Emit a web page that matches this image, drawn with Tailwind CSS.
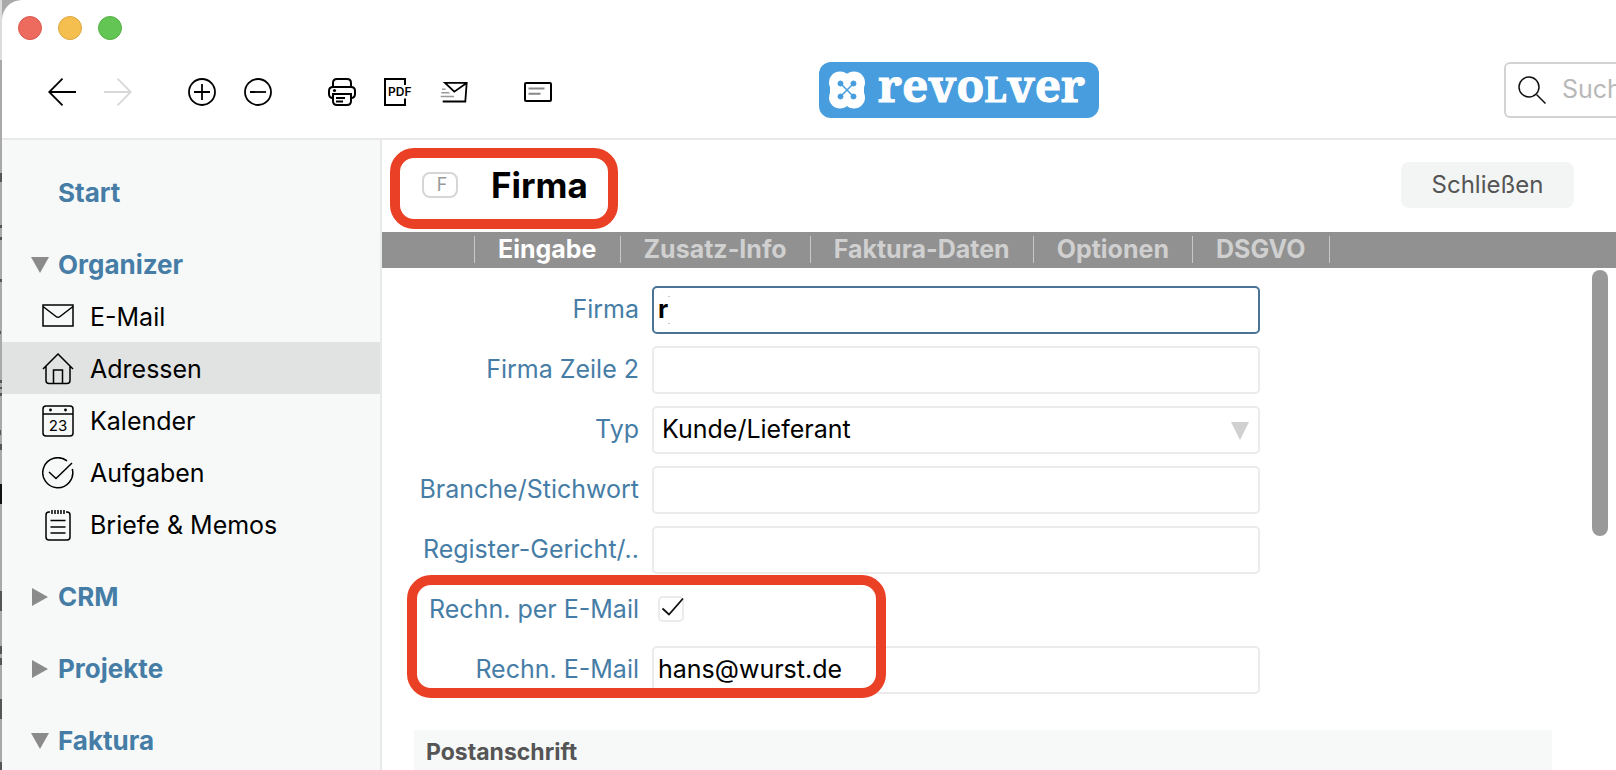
<!DOCTYPE html>
<html lang="de">
<head>
    <meta charset="UTF-8">
    <meta name="viewport" content="width=device-width, initial-scale=1.0">
    <title>revolver – Firma</title>
    <script src="https://cdn.jsdelivr.net/npm/@tailwindcss/browser@4"></script>
</head>
<body class="h-screen overflow-hidden bg-[#a9a9a9] pl-[2px] font-['Inter','Liberation_Sans',sans-serif] text-[25px] leading-8 text-black">
    <!-- document behind the window -->
    <svg class="absolute left-0 top-0 h-full w-[2px]" viewBox="0 0 2 770" preserveAspectRatio="none" fill="#555">
        <path fill="#dedcda" d="M0 0h2v60H0z"/>
        <path d="M0 173h2v9H0zM0 225h2v3H0zM0 237h2v3H0zM0 279h2v3H0zM0 331h1v3H0zM0 380h2v3H0zM0 387h2v2H0zM0 393h2v3H0zM0 430h1v5H0zM0 444h2v6H0zM0 591h2v20H0zM0 646h2v8H0zM0 658h2v7H0zM0 699h2v20H0zM0 762h2v8H0z"/>
        <path fill="#111" d="M0 484h2v20H0z"/>
    </svg>

    <div class="relative flex h-full flex-col overflow-hidden rounded-tl-[20px] bg-white">
        <header class="shrink-0 border-b-2 border-[#e9e9e9] pt-4 pb-5">
            <div class="flex gap-4 pl-4">
                <button type="button" aria-label="Fenster schließen" class="size-6 rounded-full border border-[#d9584e] bg-[#ed6a5f]"></button>
                <button type="button" aria-label="Minimieren" class="size-6 rounded-full border border-[#dda63f] bg-[#f5bf4f]"></button>
                <button type="button" aria-label="Vollbild" class="size-6 rounded-full border border-[#56b045] bg-[#62c554]"></button>
            </div>
            <div class="mt-[22px] flex items-center pl-[46px]">
                <div class="flex shrink-0 items-center gap-14 pt-1">
                    <div class="flex gap-7">
                        <button type="button" aria-label="Zurück">
                            <svg class="size-7" viewBox="0 0 28 28" fill="none" stroke="#000" stroke-width="1.8"><path d="M28 14H1.500M14.500 .7 1.200 14l13.300 13.300"/></svg>
                        </button>
                        <button type="button" aria-label="Vor">
                            <svg class="size-7" viewBox="0 0 28 28" fill="none" stroke="#d8d8d8" stroke-width="1.8"><path d="M0 14h26.500M13.500 .7 26.800 14 13.500 27.300"/></svg>
                        </button>
                    </div>
                    <div class="flex gap-7">
                        <button type="button" aria-label="Neu">
                            <svg class="size-7" viewBox="0 0 28 28" fill="none" stroke="#000" stroke-width="1.8"><circle cx="14" cy="14" r="13"/><path d="M6 14h16M14 6v16"/></svg>
                        </button>
                        <button type="button" aria-label="Entfernen">
                            <svg class="size-7" viewBox="0 0 28 28" fill="none" stroke="#000" stroke-width="1.8"><circle cx="14" cy="14" r="13"/><path d="M6 14h16"/></svg>
                        </button>
                    </div>
                    <div class="flex gap-7">
                        <button type="button" aria-label="Drucken">
                            <svg class="size-7" viewBox="0 0 28 28" fill="none" stroke="#000" stroke-width="2">
                                <path d="M5 9V5q0-4 4-4h10q4 0 4 4v4"/>
                                <path d="M5 20q-4 0-4-4v-3q0-4 4-4h18q4 0 4 4v3q0 4-4 4"/>
                                <path d="M4 16h20M5 16v7q0 4 4 4h10q4 0 4-4v-7"/>
                                <path d="M8 20h9M8 23.500h7"/>
                                <circle cx="6.500" cy="12.500" r="1.600" fill="#000" stroke="none"/>
                            </svg>
                        </button>
                        <button type="button" aria-label="PDF">
                            <svg class="size-7 overflow-visible" viewBox="0 0 28 28" fill="none" stroke="#000" stroke-width="2">
                                <path d="M21 7V1H1v26h20v-6.500"/>
                                <text x="4" y="18" font-size="12" font-weight="600" fill="#000" stroke="none">PDF</text>
                            </svg>
                        </button>
                        <button type="button" aria-label="Senden">
                            <svg class="size-7 overflow-visible" viewBox="0 0 28 28" fill="none" stroke="#000" stroke-width="1.8">
                                <path d="M2.700 23.500h22.600L26.700 4.900H5l9.300 8.800 12.400-8.800"/>
                                <path stroke="#999" stroke-width="1.500" d="M2 11.300h3.500M1.300 14.800h8M.7 18.500h13.300"/>
                            </svg>
                        </button>
                    </div>
                    <button type="button" aria-label="Notiz">
                        <svg class="size-7" viewBox="0 0 28 28" fill="none" stroke="#000" stroke-width="2"><rect x="1" y="5" width="26" height="18" rx="1"/><path stroke="#888" d="M4.500 10.500h16M4.500 15.700h12"/></svg>
                    </button>
                </div>

                <a href="#" aria-label="revolver" class="ml-[267px] shrink-0">
                    <svg class="h-14 w-[280px]" viewBox="0 0 280 56">
                        <rect width="280" height="56" rx="12" fill="#479ddd"/>
                        <g fill="#fff">
                            <circle cx="21" cy="20.500" r="11"/><circle cx="35" cy="20.500" r="11"/>
                            <circle cx="21" cy="35.500" r="11"/><circle cx="35" cy="35.500" r="11"/>
                            <rect x="11" y="22" width="34" height="12"/>
                        </g>
                        <g fill="#479ddd" stroke="#479ddd">
                            <circle cx="21.500" cy="21.500" r="2.500"/><circle cx="34.500" cy="21.500" r="2.500"/>
                            <circle cx="21.500" cy="34.500" r="2.500"/><circle cx="34.500" cy="34.500" r="2.500"/>
                            <path stroke-width="1.500" d="M21.500 21.500l13 13M34.500 21.500l-13 13"/>
                        </g>
                        <text x="59" y="40" fill="#fff" stroke="#fff" font-family="Noto Serif, DejaVu Serif, serif" font-size="46" font-weight="700">revo<tspan font-size="34">L</tspan>ver</text>
                    </svg>
                </a>

                <label class="ml-auto flex h-14 w-28 shrink-0 items-center overflow-hidden rounded-l-md border-2 border-r-0 border-[#d3d3d3] pl-3">
                    <svg class="size-7 shrink-0" viewBox="0 0 28 28" fill="none" stroke="#111" stroke-width="1.500"><circle cx="11" cy="11" r="10"/><path d="M18.500 18.500 27.500 27.500"/></svg>
                    <input type="search" aria-label="Suchen" placeholder="Suchen" class="ml-4 w-28 shrink-0 pb-[2px] placeholder:text-[#b8b8b8] outline-none">
                </label>
            </div>
        </header>

        <div class="flex min-h-0 flex-1">
            <nav class="w-[380px] shrink-0 overflow-hidden border-r-2 border-[#e9e9e9] bg-[#f7f9f9] pt-[26px]">
                <a href="#" class="flex h-[52px] items-center pl-14 pt-[2px] text-[26px] font-bold text-[#467da6]">Start</a>

                <a href="#" class="mt-5 flex h-[52px] items-center pt-[2px] text-[26px] font-bold text-[#467da6]">
                    <svg class="ml-[29px] mr-[9px] h-4 w-[18px]" viewBox="0 0 18 16" fill="#8b8b8b"><path d="M0 0h18L9 16z"/></svg>Organizer
                </a>
                <a href="#" class="flex h-[52px] items-center gap-4 pl-10 pt-[2px]">
                    <svg class="size-8" viewBox="0 0 32 32" fill="none" stroke="#000" stroke-width="1.500"><path d="M1 4h30v21H1zM1 5.500l13 10q2 1.500 4 0l13-10"/></svg>E-Mail
                </a>
                <a href="#" class="flex h-[52px] items-center gap-4 bg-[#e1e3e2] pl-10 pt-[2px]">
                    <svg class="size-8" viewBox="0 0 32 32" fill="none" stroke="#000" stroke-width="1.500"><path d="M1 16 16 1l15 15M4 13.500v14q0 3 3 3h18q3 0 3-3v-14M11.500 30.500V17h9v13.500"/></svg>Adressen
                </a>
                <a href="#" class="flex h-[52px] items-center gap-4 pl-10 pt-[2px]">
                    <svg class="size-8" viewBox="0 0 32 32" fill="none" stroke="#000" stroke-width="1.500">
                        <rect x="1" y="1" width="30" height="30" rx="3"/><path d="M1 9h30"/>
                        <circle cx="8.500" cy="5" r="1.400" fill="#000" stroke="none"/><circle cx="23.500" cy="5" r="1.400" fill="#000" stroke="none"/>
                        <text x="16" y="26" text-anchor="middle" font-size="15" fill="#000" stroke="none">23</text>
                    </svg>Kalender
                </a>
                <a href="#" class="flex h-[52px] items-center gap-4 pl-10 pt-[2px]">
                    <svg class="size-8" viewBox="0 0 32 32" fill="none" stroke="#000" stroke-width="1.500"><path d="M25 3.900A15 15 0 1 0 30.300 12M7 15l7 6.500L30 6"/></svg>Aufgaben
                </a>
                <a href="#" class="flex h-[52px] items-center gap-4 pl-10 pt-[2px]">
                    <svg class="size-8" viewBox="0 0 32 32" fill="none" stroke="#000" stroke-width="1.500"><path d="M8 3H7Q4 3 4 6v22q0 3 3 3h18q3 0 3-3V6q0-3-3-3h-1M10 1v4M13 1v4M16 1v4M19 1v4M22 1v4M8.500 11.500h15M8.500 18h15M8.500 24h15"/></svg>Briefe &amp; Memos
                </a>

                <a href="#" class="mt-5 flex h-[52px] items-center pt-[2px] text-[26px] font-bold text-[#467da6]">
                    <svg class="ml-[29px] mr-[9px] h-[18px] w-[18px]" viewBox="0 0 18 18" fill="#8b8b8b"><path d="M1 0v18L17 9z"/></svg>CRM
                </a>
                <a href="#" class="mt-5 flex h-[52px] items-center pt-[2px] text-[26px] font-bold text-[#467da6]">
                    <svg class="ml-[29px] mr-[9px] h-[18px] w-[18px]" viewBox="0 0 18 18" fill="#8b8b8b"><path d="M1 0v18L17 9z"/></svg>Projekte
                </a>
                <a href="#" class="mt-5 flex h-[52px] items-center pt-[2px] text-[26px] font-bold text-[#467da6]">
                    <svg class="ml-[29px] mr-[9px] h-4 w-[18px]" viewBox="0 0 18 16" fill="#8b8b8b"><path d="M0 0h18L9 16z"/></svg>Faktura
                </a>
            </nav>

            <main class="flex min-w-0 flex-1 flex-col">
                <div class="flex h-[92px] shrink-0 items-center justify-between pl-2 pr-[42px] pb-[2px]">
                    <div class="relative flex h-[74px] w-[228px] items-center pl-8">
                        <span class="flex h-[26px] w-9 items-center justify-center rounded-lg border-2 border-[#d6d6d6] pl-1 text-[18px] text-[#999]">F</span>
                        <h1 class="ml-[33px] text-[35px] font-bold">Firma</h1>
                        <div class="absolute inset-x-0 top-0 h-[81px] rounded-3xl border-10 border-[#ea4126]"></div>
                    </div>
                    <button type="button" class="h-[46px] w-[173px] rounded-lg bg-[#f3f5f4] text-2xl text-[#555]">Schließen</button>
                </div>

                <div class="flex h-9 shrink-0 bg-[#919191] pl-[92px] pt-1 font-bold text-[#d0d0d0]">
                    <button type="button" class="h-[27px] border-x border-[#c8c8c8] px-[23px] leading-[27px] text-white">Eingabe</button>
                    <button type="button" class="h-[27px] border-r border-[#c8c8c8] px-[23px] leading-[27px]">Zusatz-Info</button>
                    <button type="button" class="h-[27px] border-r border-[#c8c8c8] px-[23px] leading-[27px]">Faktura-Daten</button>
                    <button type="button" class="h-[27px] border-r border-[#c8c8c8] px-[23px] leading-[27px]">Optionen</button>
                    <button type="button" class="h-[27px] border-r border-[#c8c8c8] px-[23px] leading-[27px]">DSGVO</button>
                </div>

                <div class="flex min-h-0 flex-1">
                    <form class="min-w-0 flex-1 overflow-hidden pl-8 pr-10 pt-[18px]">
                        <div class="relative grid grid-cols-[225px_minmax(0,608px)] items-center gap-x-[13px] gap-y-3">
                            <label for="firma" class="whitespace-nowrap pb-[2px] text-right text-[#467da6]">Firma</label>
                            <div class="relative">
                                <input id="firma" type="text" value="r" class="block h-12 w-full rounded-[5px] border-2 border-[#4a7396] px-1 pb-[2px] font-bold outline-none">
                                <div class="absolute left-4 top-[10px] h-7 w-[2px] border-y border-[#ccc]"></div>
                            </div>

                            <label for="firma2" class="whitespace-nowrap pb-[2px] text-right text-[#467da6]">Firma Zeile 2</label>
                            <input id="firma2" type="text" class="block h-12 w-full rounded-[5px] border-2 border-[#ebebeb] px-1 pb-[2px] outline-none">

                            <label for="typ" class="whitespace-nowrap pb-[2px] text-right text-[#467da6]">Typ</label>
                            <div class="relative">
                                <select id="typ" class="block h-12 w-full appearance-none rounded-[5px] border-2 border-[#ebebeb] px-2 pb-[2px] outline-none">
                                    <option>Kunde/Lieferant</option>
                                </select>
                                <svg class="pointer-events-none absolute right-[11px] top-4 h-[18px] w-[18px]" viewBox="0 0 18 18" fill="#d0d0d0"><path d="M0 0h18L9 18z"/></svg>
                            </div>

                            <label for="branche" class="whitespace-nowrap pb-[2px] text-right text-[#467da6]">Branche/Stichwort</label>
                            <input id="branche" type="text" class="block h-12 w-full rounded-[5px] border-2 border-[#ebebeb] px-1 pb-[2px] outline-none">

                            <label for="register" class="whitespace-nowrap pb-[2px] text-right text-[#467da6]">Register-Gericht/..</label>
                            <input id="register" type="text" class="block h-12 w-full rounded-[5px] border-2 border-[#ebebeb] px-1 pb-[2px] outline-none">

                            <label for="permail" class="whitespace-nowrap pb-[2px] text-right text-[#467da6]">Rechn. per E-Mail</label>
                            <div class="relative flex h-12 items-center pl-[6px] pb-[2px]">
                                <input id="permail" type="checkbox" checked class="peer size-[26px] appearance-none rounded-[5px] border-2 border-[#ebebeb]">
                                <svg class="pointer-events-none absolute left-[6px] hidden size-[26px] peer-checked:block" viewBox="0 0 26 26" fill="none" stroke="#111" stroke-width="1.8"><path d="M4.500 12.500l6.500 6L25 2.500"/></svg>
                            </div>

                            <label for="remail" class="whitespace-nowrap pb-[2px] text-right text-[#467da6]">Rechn. E-Mail</label>
                            <input id="remail" type="text" value="hans@wurst.de" class="block h-12 w-full rounded-[5px] border-2 border-[#ebebeb] px-1 pb-[2px] outline-none">

                            <div class="pointer-events-none absolute -bottom-1 -left-[7px] h-[123px] w-[479px] rounded-3xl border-10 border-[#ea4126]"></div>
                        </div>

                        <h2 class="mt-9 h-11 bg-[#f7f9f8] pl-3 text-[23px] font-bold leading-[44px] text-[#555]">Postanschrift</h2>
                    </form>
                    <div class="w-6 shrink-0 pt-[2px]">
                        <div class="h-[266px] w-4 rounded-full bg-[#999]"></div>
                    </div>
                </div>
            </main>
        </div>
    </div>
</body>
</html>
